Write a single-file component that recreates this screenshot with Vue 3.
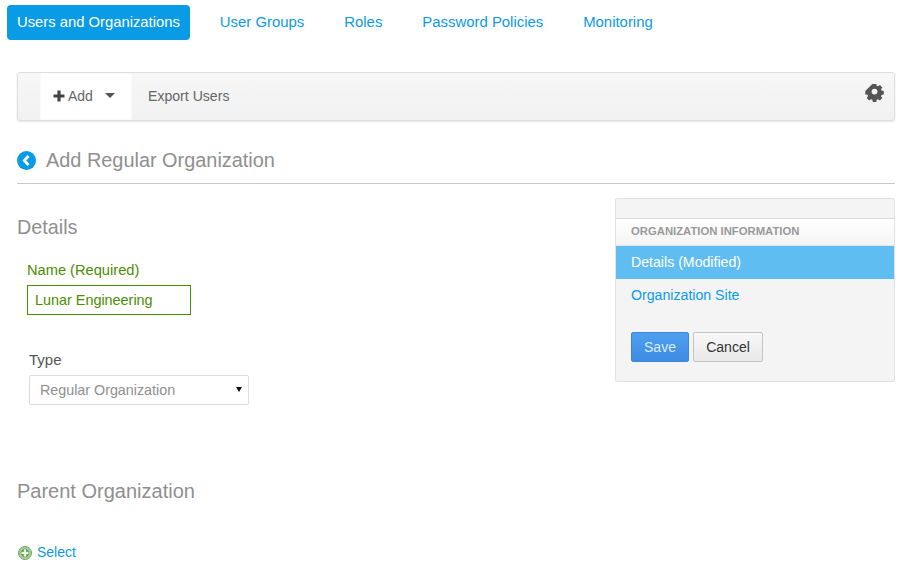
<template>
  <div class="page">
    <nav class="tabs">
      <a v-for="tab in tabs" :key="tab" :class="['tab', { active: tab === activeTab }]">{{ tab }}</a>
    </nav>

    <div class="toolbar">
      <div class="add-item">
        <svg class="plus" viewBox="0 0 12 12" width="12" height="12"><path d="M4.4 0.5h3.2v3.9h3.9v3.2H7.6v3.9H4.4V7.6H0.5V4.4h3.9z" /></svg>
        <span>Add</span>
        <i class="caret"></i>
      </div>
      <div class="export-item">Export Users</div>
      <svg class="gear" viewBox="0 0 24 24" width="19" height="19">
        <path fill-rule="evenodd" d="M9.6 1h4.8l.6 3.1 1.7.7 2.6-1.8 3.4 3.4-1.8 2.6.7 1.7 3.1.6v4.8l-3.1.6-.7 1.7 1.8 2.6-3.4 3.4-2.6-1.8-1.7.7-.6 3.1H9.6L9 23.100l-1.700-.7-2.600 1.800-3.400-3.400 1.800-2.600-.7-1.700L-.7 15.900v-4.800zM12 8a4 4 0 1 0 0 8 4 4 0 0 0 0-8z" transform="translate(1 -1.500) scale(.92)" />
      </svg>
    </div>

    <header class="title">
      <svg class="back" viewBox="0 0 19 19" width="19" height="19">
        <circle cx="9.500" cy="9.500" r="9.500" fill="#0a9be6" />
        <path d="M11.500 5l-4.200 4.500 4.200 4.500" fill="none" stroke="#fff" stroke-width="2.800" />
      </svg>
      <h1>Add Regular Organization</h1>
    </header>

    <div class="columns">
      <main class="form">
        <h2 class="details-title">Details</h2>
        <label class="name-label">Name (Required)</label>
        <input class="name-input" type="text" value="Lunar Engineering" />
        <label class="type-label">Type</label>
        <div class="select">
          <span>Regular Organization</span>
          <i class="select-arrow"></i>
        </div>
        <h2 class="parent-title">Parent Organization</h2>
        <a class="select-link">
          <svg viewBox="0 0 14 14" width="14" height="14">
            <circle cx="7" cy="7" r="6.500" fill="#a6cf9a" stroke="#6fa866" />
            <circle cx="7" cy="7" r="4.200" fill="#62ad54" />
            <path d="M5.900 3.600h2.200v2.300h2.300v2.200H8.100v2.300H5.900V8.100H3.600V5.900h2.300z" fill="#fff" />
          </svg>
          Select
        </a>
      </main>

      <aside class="panel">
        <div class="panel-top"></div>
        <div class="panel-head">ORGANIZATION INFORMATION</div>
        <a class="panel-link current">Details (Modified)</a>
        <a class="panel-link">Organization Site</a>
        <div class="actions">
          <button class="btn save" type="button">Save</button>
          <button class="btn cancel" type="button">Cancel</button>
        </div>
      </aside>
    </div>
  </div>
</template>

<script setup>
const activeTab = 'Users and Organizations';
const tabs = ['Users and Organizations', 'User Groups', 'Roles', 'Password Policies', 'Monitoring'];
</script>

<style>
html,
body {
  margin: 0;
  background: #fff;
  overflow: hidden;
}
</style>

<style scoped>
.page {
  width: 900px;
  height: 569px;
  overflow: hidden;
  font-family: 'Liberation Sans', Arial, sans-serif;
  color: #555;
}

.tabs {
  display: flex;
  gap: 20px;
  padding: 5px 0 0 7px;
  height: 35px;
}

.tab {
  display: block;
  padding: 0 10px;
  line-height: 35px;
  font-size: 14.9px;
  color: #0a9be6;
  border-radius: 4px;
}

.tab.active {
  background: #0a9be6;
  color: #fff;
  font-size: 14.8px;
}

.toolbar {
  display: flex;
  align-items: stretch;
  position: relative;
  box-sizing: border-box;
  height: 49px;
  margin: 32px 5px 0 17px;
  padding-left: 22px;
  border: 1px solid #ddd;
  border-radius: 3px;
  background: linear-gradient(#f7f7f7, #f1f1f1);
  box-shadow: 0 1px 2px rgba(0, 0, 0, 0.1);
}

.add-item {
  display: flex;
  align-items: center;
  width: 92px;
  box-sizing: border-box;
  padding: 0 0 2px 13px;
  background: #fff;
  font-size: 14px;
  color: #666;
  box-shadow: inset 0 0 3px rgba(0, 0, 0, 0.05);
}

.plus {
  fill: #444;
  margin-right: 3px;
}

.caret {
  width: 0;
  height: 0;
  margin-left: 12px;
  border-left: 5px solid transparent;
  border-right: 5px solid transparent;
  border-top: 5px solid #555;
}

.export-item {
  display: flex;
  align-items: center;
  padding: 0 0 2px 16px;
  font-size: 14.1px;
  color: #666;
}

.gear {
  position: absolute;
  top: 11px;
  right: 10px;
  fill: #555;
}

.title {
  display: flex;
  align-items: center;
  gap: 10px;
  box-sizing: border-box;
  height: 63px;
  margin: 0 5px 0 17px;
  padding: 18px 0 1px;
  border-bottom: 1px solid #c8c8c8;
}

.title h1 {
  margin: 0;
  font-size: 19.9px;
  font-weight: 400;
  color: #8f8f8f;
}

.columns {
  display: flex;
  justify-content: space-between;
  margin: 14px 5px 0 17px;
}

.form {
  display: flex;
  flex-direction: column;
  align-items: flex-start;
}

.details-title,
.parent-title {
  margin: 0;
  font-size: 20px;
  line-height: 24px;
  font-weight: 400;
  color: #8f8f8f;
}

.details-title {
  margin-top: 17px;
  font-size: 19.8px;
}

.name-label {
  margin: 23px 0 0 10px;
  font-size: 14.65px;
  line-height: 17px;
  color: #4b8d00;
}

.name-input {
  box-sizing: border-box;
  width: 164px;
  height: 30px;
  margin: 6px 0 0 10px;
  padding: 0 7px;
  border: 1px solid #4b8d00;
  border-radius: 0;
  outline: none;
  background: #fff;
  font-family: inherit;
  font-size: 14.4px;
  color: #4b8d00;
}

.type-label {
  margin: 36px 0 0 12px;
  font-size: 15px;
  line-height: 17px;
  color: #555;
}

.select {
  display: flex;
  align-items: center;
  justify-content: space-between;
  box-sizing: border-box;
  width: 220px;
  height: 30px;
  margin: 7px 0 0 12px;
  padding: 0 6px 0 10px;
  border: 1px solid #ddd;
  border-radius: 2px;
  font-size: 14.3px;
  color: #8f8f8f;
}

.select-arrow {
  width: 0;
  height: 0;
  margin-top: -1px;
  border-left: 3px solid transparent;
  border-right: 3px solid transparent;
  border-top: 5px solid #111;
}

.parent-title {
  margin-top: 74px;
}

.select-link {
  display: flex;
  align-items: center;
  gap: 5px;
  margin: 41px 0 0 1px;
  font-size: 14px;
  line-height: 17px;
  color: #0a9be6;
}

.panel {
  box-sizing: border-box;
  width: 280px;
  height: 184px;
  border: 1px solid #e2e2e2;
  border-radius: 2px;
  background: #f4f4f4;
}

.panel-top {
  height: 19px;
  border-bottom: 1px solid #dcdcdc;
}

.panel-head {
  box-sizing: border-box;
  height: 27px;
  padding-left: 15px;
  line-height: 25px;
  font-size: 11.3px;
  font-weight: 700;
  color: #999;
  border-bottom: 1px solid #e4e4e4;
  background: linear-gradient(#fff, #f4f4f4);
}

.panel-link {
  display: block;
  height: 33px;
  padding-left: 15px;
  line-height: 33px;
  font-size: 14.15px;
  color: #0a9be6;
}

.panel-link.current {
  background: #5fbdf1;
  color: #fff;
}

.actions {
  display: flex;
  gap: 4px;
  margin-top: 20px;
  padding-left: 15px;
}

.btn {
  box-sizing: border-box;
  height: 30px;
  padding: 0;
  border-radius: 2px;
  font-family: inherit;
  font-size: 14px;
}

.save {
  width: 58px;
  border: 1px solid #3f86d8;
  background: linear-gradient(#4fa0f0, #3f8ce4);
  color: #d8ebfb;
}

.cancel {
  width: 70px;
  border: 1px solid #c4c4c4;
  background: linear-gradient(#f8f8f8, #e8e8e8);
  color: #333;
}
</style>
